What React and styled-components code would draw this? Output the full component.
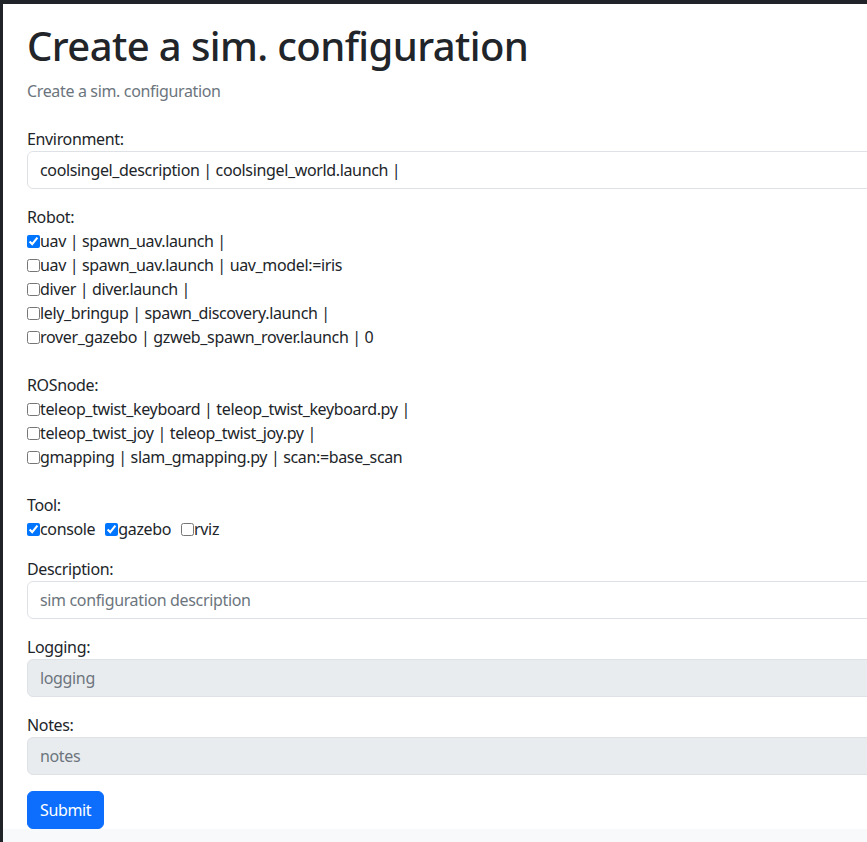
import React from "react";
import styled, { createGlobalStyle } from "styled-components";

const GlobalStyle = createGlobalStyle`
  html, body {
    margin: 0;
    padding: 0;
    background: #f8f9fa;
  }
  body {
    font-family: "Noto Sans", "Liberation Sans", sans-serif;
    font-size: 16px;
    line-height: 1.5;
    letter-spacing: -0.35px;
    color: #212529;
  }
`;

const Frame = styled.div`
  height: 842px;
  overflow: hidden;
  border-top: 4px solid #202328;
  border-left: 3px solid #202328;
  box-sizing: border-box;
  background: #f8f9fa;
`;

const Page = styled.main`
  background: #fff;
  padding: 18px 0 0 24px;
  width: 1100px;
  box-sizing: border-box;
`;

const Title = styled.h1`
  margin: 0 0 9px;
  font-size: 40px;
  font-weight: 500;
  line-height: 48px;
  letter-spacing: -0.6px;
`;

const Lead = styled.p`
  margin: 0 0 24px;
  color: #6c757d;
`;

const Field = styled.div`
  margin-bottom: ${p => p.$gap || 16}px;
`;

const Label = styled.label`
  display: block;
`;

const Input = styled.input`
  display: block;
  box-sizing: border-box;
  width: 1000px;
  height: 38px;
  padding: 6px 12px;
  font: inherit;
  letter-spacing: inherit;
  color: #212529;
  background: ${p => (p.disabled ? "#e9ecef" : "#fff")};
  border: 1px solid #dee2e6;
  border-radius: 6px;
  outline: none;

  &::placeholder {
    color: #6c757d;
  }
`;

const CheckRow = styled.div`
  display: flex;
  align-items: center;
`;

const InlineChecks = styled.div`
  display: flex;
  align-items: center;
  gap: 10px;
`;

const Check = styled.label`
  display: inline-flex;
  align-items: center;
  white-space: nowrap;

  input {
    margin: 0;
    width: 13px;
    height: 13px;
  }
`;

const SubmitButton = styled.button`
  font: inherit;
  letter-spacing: inherit;
  color: #fff;
  background: #0d6efd;
  border: 1px solid #0d6efd;
  border-radius: 6px;
  padding: 6px 12px;
  line-height: 24px;
  cursor: pointer;
`;

const Bottom = styled.div`
  height: 13px;
`;

const robots = [
  ["uav | spawn_uav.launch |", true],
  ["uav | spawn_uav.launch | uav_model:=iris", false],
  ["diver | diver.launch |", false],
  ["lely_bringup | spawn_discovery.launch |", false],
  ["rover_gazebo | gzweb_spawn_rover.launch | 0", false],
];

const nodes = [
  "teleop_twist_keyboard | teleop_twist_keyboard.py |",
  "teleop_twist_joy | teleop_twist_joy.py |",
  "gmapping | slam_gmapping.py | scan:=base_scan",
];

const tools = [
  ["console", true],
  ["gazebo", true],
  ["rviz", false],
];

const App = () => {
  return (
    <Frame>
      <GlobalStyle />
      <Page>
        <Title>Create a sim. configuration</Title>
        <Lead>Create a sim. configuration</Lead>

        <Field>
          <Label>Environment:</Label>
          <Input defaultValue="coolsingel_description | coolsingel_world.launch |" />
        </Field>

        <Field $gap={24}>
          <Label>Robot:</Label>
          {robots.map(([text, on]) => (
            <CheckRow key={text}>
              <Check>
                <input type="checkbox" defaultChecked={on} />
                {text}
              </Check>
            </CheckRow>
          ))}
        </Field>

        <Field $gap={24}>
          <Label>ROSnode:</Label>
          {nodes.map(text => (
            <CheckRow key={text}>
              <Check>
                <input type="checkbox" />
                {text}
              </Check>
            </CheckRow>
          ))}
        </Field>

        <Field>
          <Label>Tool:</Label>
          <InlineChecks>
            {tools.map(([text, on]) => (
              <Check key={text}>
                <input type="checkbox" defaultChecked={on} />
                {text}
              </Check>
            ))}
          </InlineChecks>
        </Field>

        <Field>
          <Label>Description:</Label>
          <Input placeholder="sim configuration description" />
        </Field>

        <Field>
          <Label>Logging:</Label>
          <Input placeholder="logging" disabled />
        </Field>

        <Field>
          <Label>Notes:</Label>
          <Input placeholder="notes" disabled />
        </Field>

        <SubmitButton type="button">Submit</SubmitButton>
      </Page>
      <Bottom />
    </Frame>
  );
};

export default App;
